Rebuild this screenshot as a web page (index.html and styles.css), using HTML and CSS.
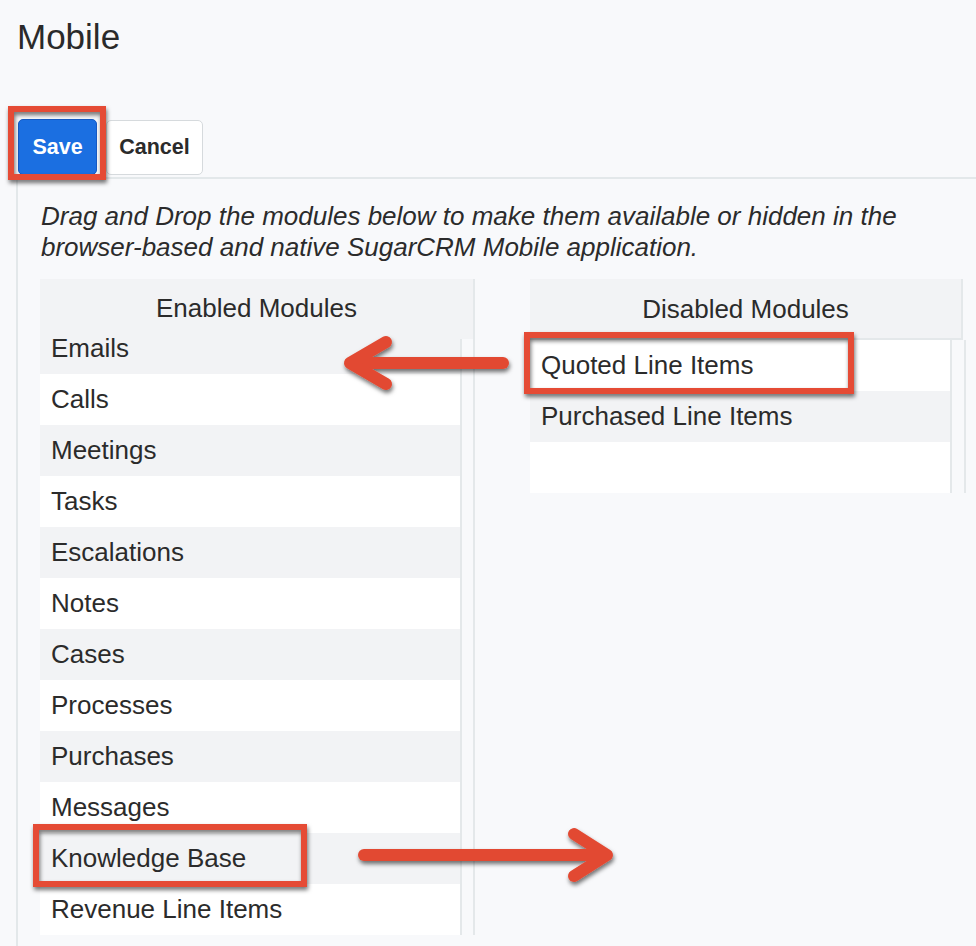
FILE: index.html
```
<!DOCTYPE html>
<html>
<head>
<meta charset="utf-8">
<title>Mobile</title>
<link rel="stylesheet" href="styles.css">
</head>
<body>
<div class="page">
  <h1 class="title">Mobile</h1>
  <div class="toolbar">
    <button class="btn btn-primary">Save</button>
    <button class="btn btn-default">Cancel</button>
  </div>
  <div class="panel">
    <p class="desc">Drag and Drop the modules below to make them available or hidden in the browser-based and native SugarCRM Mobile application.</p>
    <div class="columns">
      <div class="col col-enabled">
        <div class="col-head">Enabled Modules</div>
        <div class="col-body">
          <ul class="list">
            <li class="row alt">Emails</li>
            <li class="row">Calls</li>
            <li class="row alt">Meetings</li>
            <li class="row">Tasks</li>
            <li class="row alt">Escalations</li>
            <li class="row">Notes</li>
            <li class="row alt">Cases</li>
            <li class="row">Processes</li>
            <li class="row alt">Purchases</li>
            <li class="row">Messages</li>
            <li class="row alt">Knowledge Base</li>
            <li class="row">Revenue Line Items</li>
          </ul>
          <div class="gutter"></div>
        </div>
      </div>
      <div class="col col-disabled">
        <div class="col-head">Disabled Modules</div>
        <div class="col-body">
          <ul class="list">
            <li class="row">Quoted Line Items</li>
            <li class="row alt">Purchased Line Items</li>
            <li class="row"></li>
          </ul>
          <div class="gutter"></div>
        </div>
      </div>
    </div>
  </div>
  <svg class="annotations" width="976" height="946" viewBox="0 0 976 946" xmlns="http://www.w3.org/2000/svg">
    <defs>
      <filter id="sh" x="-20%" y="-20%" width="140%" height="160%">
        <feDropShadow dx="1" dy="3" stdDeviation="2.2" flood-color="#000" flood-opacity="0.55"/>
      </filter>
    </defs>
    <g fill="none" stroke="#e54b35" filter="url(#sh)">
      <rect x="11" y="109" width="92" height="68" stroke-width="6"/>
      <rect x="527" y="335" width="324" height="56" stroke-width="6"/>
      <rect x="36" y="827" width="268" height="57" stroke-width="6"/>
    </g>
    <g fill="none" stroke="#e24a33" stroke-width="12" stroke-linecap="round" stroke-linejoin="round" filter="url(#sh)">
      <line x1="352" y1="363" x2="503" y2="363"/>
      <polyline points="386,342 350,363 386,384"/>
      <line x1="364" y1="855" x2="602" y2="855"/>
      <polyline points="574,834 607,855 574,876"/>
    </g>
  </svg>
</div>
</body>
</html>
```
FILE: styles.css
```
html, body {
  margin: 0;
  padding: 0;
}
body {
  background: #f8f9fb;
  font-family: "Liberation Sans", Arial, Helvetica, sans-serif;
  color: #2b2b2b;
  width: 976px;
  height: 946px;
  overflow: hidden;
}
.page {
  position: relative;
  width: 976px;
  height: 946px;
  overflow: hidden;
}
.title {
  margin: 0;
  padding: 17px 0 0 17px;
  font-size: 35px;
  font-weight: normal;
  line-height: 40px;
  color: #2a2a2a;
}
.toolbar {
  display: flex;
  gap: 9px;
  padding: 62px 0 0 18px;
}
.btn {
  height: 56px;
  border-radius: 5px;
  font-family: "Liberation Sans", Arial, sans-serif;
  font-size: 21.5px;
  font-weight: bold;
  padding: 0;
  margin: 0;
}
.btn-primary {
  width: 79px;
  background: #1b6fe1;
  color: #fff;
  border: 1px solid #1559c4;
}
.btn-default {
  width: 97px;
  height: 55px;
  margin-top: 1px;
  background: #fff;
  color: #2b2b2b;
  border: 1px solid #d6dadd;
}
.panel {
  box-sizing: border-box;
  margin: 2px 0 0 16px;
  border-top: 2px solid #e3e8ea;
  border-left: 2px solid #e3e8ea;
  padding: 22px 0 0 22px;
  height: 769px;
}
.desc {
  margin: 0;
  padding-left: 1px;
  font-style: italic;
  font-size: 26px;
  line-height: 31px;
  color: #2b2b2b;
  width: 930px;
}
.columns {
  display: flex;
  gap: 55px;
  margin-top: 16px;
}
.col {
  display: flex;
  flex-direction: column;
  width: 436px;
}
.col-enabled {
  width: 435px;
}
.col-head {
  background: #f2f3f5;
  text-align: center;
  font-size: 26px;
  line-height: 30px;
  border-right: 2px solid #e4e8ea;
  width: 431px;
}
.col-enabled .col-head {
  width: 433px;
  height: 30px;
  padding-top: 14px;
}
.col-disabled .col-head {
  padding-top: 15px;
  padding-bottom: 14px;
  border-bottom: 2px solid #e4e8ea;
}
.col-body {
  display: flex;
}
.col-enabled .col-body {
  background: #f2f3f5;
  border-right: 2px solid #e4e8ea;
}
.list {
  list-style: none;
  margin: 0;
  padding: 0;
  width: 420px;
}
.row {
  height: 51px;
  line-height: 51px;
  padding-left: 11px;
  font-size: 26px;
  background: #fff;
  color: #2b2b2b;
  white-space: nowrap;
}
.row.alt {
  background: #f2f3f5;
}
.gutter {
  flex: 1;
  border-left: 2px solid #e4e8ea;
  border-right: 2px solid #e4e8ea;
  background: #f8f9fb;
}
.col-enabled .gutter {
  margin-top: 16px;
  border-right: 0;
}
.annotations {
  position: absolute;
  left: 0;
  top: 0;
  pointer-events: none;
}
```
